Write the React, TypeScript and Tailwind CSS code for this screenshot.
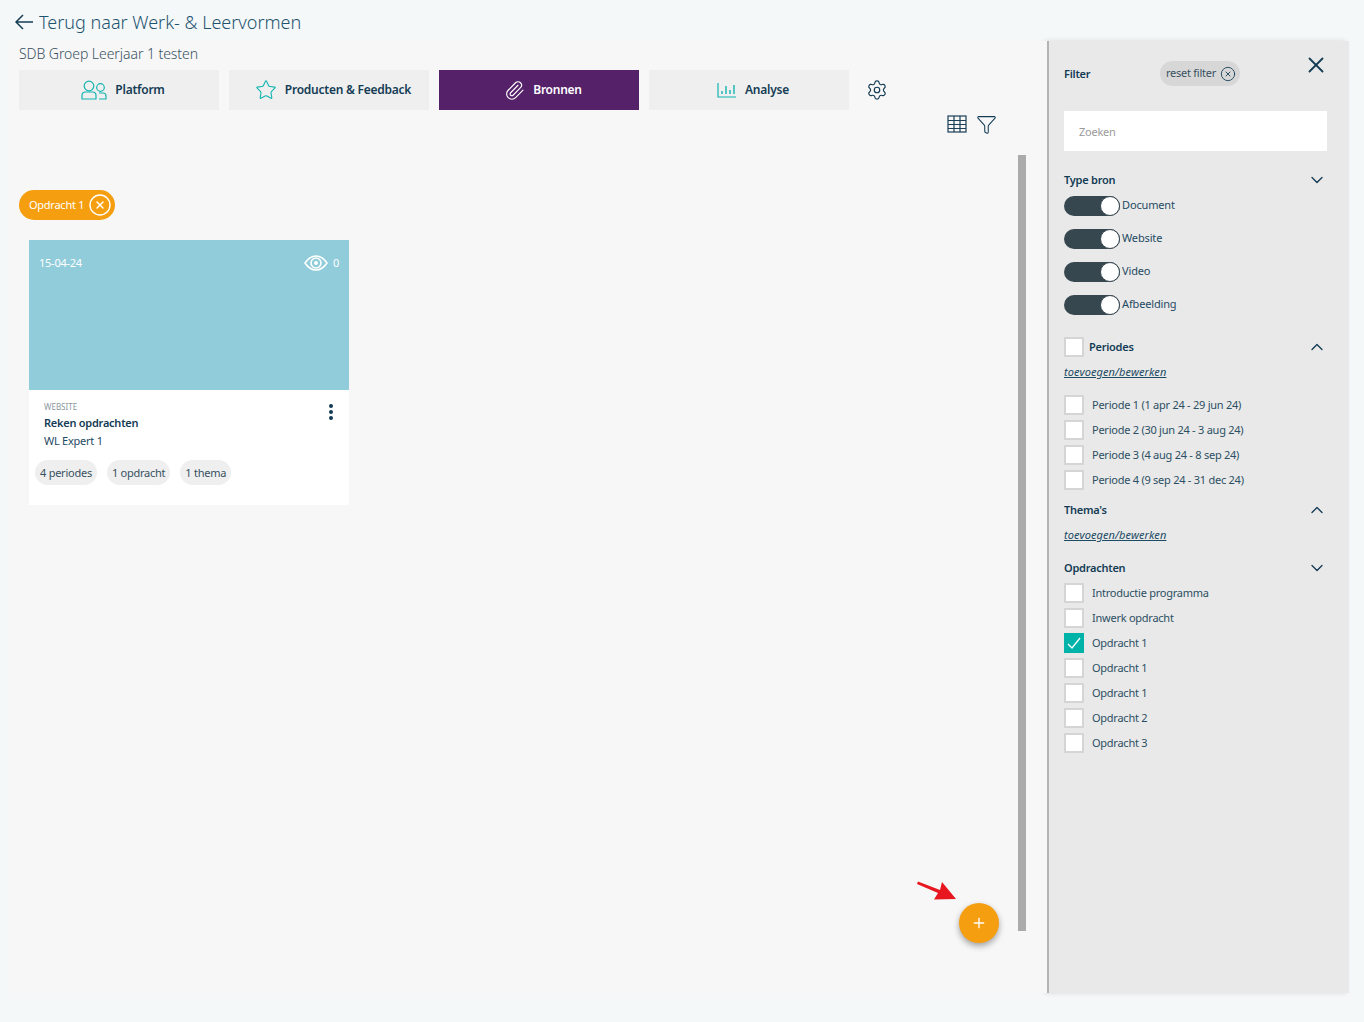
import { ChevronDown, ChevronUp, CircleX, Funnel, Paperclip, Plus, Settings, Star, X } from "lucide-react";
import type { ReactNode } from "react";

const font = { fontFamily: '"Noto Sans", sans-serif' };

function BackArrow() {
    return (
        <svg width="18" height="16" viewBox="0 0 18 16" fill="none" stroke="#143c55" strokeWidth="1.500">
            <path d="M18 8H1M8 1L1 8l7 7" />
        </svg>
    );
}

function UsersIcon() {
    return (
        <svg width="26" height="20" viewBox="0 0 26 20" fill="none" stroke="#13b5b1" strokeWidth="1.2">
            <circle cx="8" cy="6" r="4.8" />
            <path d="M1 19v-3.5C1 13.5 2.500 12 4.500 12h7c2 0 3.500 1.500 3.500 3.500V19z" />
            <circle cx="19.500" cy="7.500" r="3.800" />
            <path d="M18 19h7v-3c0-1.800-1.200-3-3-3h-4" />
        </svg>
    );
}

function ChartIcon() {
    return (
        <svg width="20" height="16" viewBox="0 0 20 16" fill="none" stroke="#13b5b1" strokeWidth="1.2">
            <path d="M1 1v14h18" />
            <path d="M5 12V9M9 12V4M13 12V8M17 12V3" strokeWidth="1.400" />
        </svg>
    );
}

function GridIcon() {
    return (
        <svg width="20" height="18" viewBox="0 0 20 18" fill="none" stroke="#1b3f56" strokeWidth="1.200">
            <rect x="1" y="1" width="18" height="16" />
            <path d="M1 5.500h18M1 9.500h18M1 13.500h18M7 1v16M13 1v16" />
        </svg>
    );
}

function EyeIcon() {
    return (
        <svg width="24" height="16" viewBox="0 0 24 16" fill="none" stroke="#ffffff" strokeWidth="1.600">
            <path d="M1 8c3-4.500 6.800-7 11-7s8 2.500 11 7c-3 4.500-6.800 7-11 7S4 12.500 1 8z" />
            <circle cx="12" cy="8" r="5" />
            <circle cx="12" cy="8" r="2" fill="#ffffff" stroke="none" />
        </svg>
    );
}

function RedArrow() {
    return (
        <svg width="40" height="20" viewBox="0 0 40 20" className="absolute top-[839px] left-[908px]">
            <path d="M1 1.500L23 10l2-8 14 17-22 .5 4-6.500L0 4z" fill="#e8171f" />
        </svg>
    );
}

function Tab({ icon, label, active }: { icon: ReactNode; label: string; active?: boolean }) {
    return (
        <div
            className={`flex h-10 w-[200px] items-center justify-center gap-[8px] pl-[8px] text-[12px] font-semibold ${
                active ? "bg-[#55226a] text-white" : "bg-[#efefef] text-[#143c55]"
            }`}
        >
            {icon}
            <span>{label}</span>
        </div>
    );
}

function Toggle({ label }: { label: string }) {
    return (
        <div className="flex h-[33px] items-start">
            <div className="flex h-5 w-14 justify-end rounded-full bg-[#37474f]">
                <div className="h-5 w-5 rounded-full border border-[#37474f] bg-white" />
            </div>
            <span className="ml-[2px] text-[11px] leading-[18px] tracking-[-0.15px] text-[#1f4a63]">{label}</span>
        </div>
    );
}

function Check({ label, checked }: { label: string; checked?: boolean }) {
    return (
        <div className="flex h-[25px] items-start">
            {checked ? (
                <div className="flex h-5 w-5 items-center justify-center bg-[#00b3a8]">
                    <svg width="14" height="12" viewBox="0 0 14 12" fill="none" stroke="#ffffff" strokeWidth="1.300">
                        <path d="M1 7l4 4 8-10" />
                    </svg>
                </div>
            ) : (
                <div className="h-5 w-5 border-2 border-[#d5d5d5] bg-white" />
            )}
            <span className="ml-2 text-[11px] leading-5 text-[#2c4f63]">{label}</span>
        </div>
    );
}

function SectionHead({ title, open, children }: { title?: string; open?: boolean; children?: ReactNode }) {
    const Chevron = open ? ChevronUp : ChevronDown;
    return (
        <div className="flex h-5 items-center justify-between">
            {children ?? <span className="text-[11px] font-semibold text-[#143c55]">{title}</span>}
            <Chevron size={20} strokeWidth={1.600} className="text-[#143c55]" />
        </div>
    );
}

function EditLink() {
    return <a className="block text-[11px] leading-5 tracking-[0.1px] text-[#1b4a63] italic underline">toevoegen/bewerken</a>;
}

function Pill({ label }: { label: string }) {
    return <span className="rounded-full bg-[#efefef] px-[5px] py-[4px] text-[11px] leading-[17px] tracking-[-0.25px] text-[#37515f]">{label}</span>;
}

export default function App() {
    const periods = [
        "Periode 1 (1 apr 24 - 29 jun 24)",
        "Periode 2 (30 jun 24 - 3 aug 24)",
        "Periode 3 (4 aug 24 - 8 sep 24)",
        "Periode 4 (9 sep 24 - 31 dec 24)",
    ];
    const assignments = ["Inwerk opdracht", "Opdracht 1", "Opdracht 1", "Opdracht 1", "Opdracht 2", "Opdracht 3"];

    return (
        <div className="h-[1022px] w-full overflow-hidden bg-[#f4f8f8] tracking-[-0.25px]" style={font}>
            {/* Back link */}
            <div className="flex h-[41px] items-center pt-[3px] pl-[15px] text-[18px] font-light tracking-[0px] text-[#1f5470]">
                <BackArrow />
                <span className="ml-[6px]">Terug naar Werk- &amp; Leervormen</span>
            </div>

            <div className="flex h-[952px] pr-[15px] pl-[9px]">
                {/* Main */}
                <div className="relative flex-1 bg-[#f7f7f7]">
                    <div className="flex h-[29px] items-center pb-[4px] pl-[10px] text-[14px] font-light tracking-[-0.06px] text-[#37515f]">SDB Groep Leerjaar 1 testen</div>
                    <div className="flex items-center gap-[10px] pl-[10px]">
                        <Tab icon={<UsersIcon />} label="Platform" />
                        <Tab icon={<Star size={22} strokeWidth={1.200} className="text-[#13b5b1]" />} label="Producten & Feedback" />
                        <Tab icon={<Paperclip size={21} strokeWidth={1.300} className="text-white" />} label="Bronnen" active />
                        <Tab icon={<ChartIcon />} label="Analyse" />
                        <Settings size={22} strokeWidth={1.300} className="ml-[7px] text-[#143c55]" />
                    </div>
                    <div className="flex h-[28px] items-center justify-end gap-[9px] pr-[50px]">
                        <GridIcon />
                        <Funnel size={21} strokeWidth={1.200} className="text-[#143c55]" />
                    </div>
                    <div className="mt-[52px] ml-[10px] flex h-[30px] w-[96px] items-center rounded-full bg-[#f59e0f] pl-[10px] text-[11px] text-white">
                        Opdracht 1
                        <CircleX size={24} strokeWidth={1.400} className="ml-[4px] shrink-0" />
                    </div>

                    {/* Card */}
                    <div className="mt-[20px] ml-[20px] h-[265px] w-[320px] bg-white">
                        <div className="flex h-[150px] items-start justify-between bg-[#90ccda] px-[10px] pt-[14px] text-[11px] text-white">
                            <span className="leading-[18px]">15-04-24</span>
                            <div className="flex items-center gap-[5px] leading-[18px]">
                                <EyeIcon />
                                <span>0</span>
                            </div>
                        </div>
                        <div className="relative px-[15px] pt-[11px]">
                            <div className="text-[8px] leading-3 tracking-[0px] text-[#8a98a0]">WEBSITE</div>
                            <div className="mt-[1px] text-[11px] leading-[18px] font-semibold text-[#143c55]">Reken opdrachten</div>
                            <div className="text-[11px] leading-[18px] text-[#1f4a63]">WL Expert 1</div>
                            <div className="mt-[10px] -ml-[9px] flex gap-[10px]">
                                <Pill label="4 periodes" />
                                <Pill label="1 opdracht" />
                                <Pill label="1 thema" />
                            </div>
                            <div className="absolute top-[14px] right-[16px] flex flex-col gap-[2px]">
                                <div className="h-[4px] w-[4px] rounded-full bg-[#143c55]" />
                                <div className="h-[4px] w-[4px] rounded-full bg-[#143c55]" />
                                <div className="h-[4px] w-[4px] rounded-full bg-[#143c55]" />
                            </div>
                        </div>
                    </div>

                    {/* Scroll thumb, arrow and add button sit over the content */}
                    <div className="absolute top-[114px] left-[1009px] h-[776px] w-[8px] bg-[#ababab]" />
                    <RedArrow />
                    <div className="absolute top-[862px] left-[950px] flex h-10 w-10 items-center justify-center rounded-full bg-[#f59e0f] shadow-[0_3px_6px_rgba(0,0,0,0.35)]">
                        <Plus size={16} strokeWidth={2} className="text-white" />
                    </div>
                </div>

                {/* Filter panel */}
                <aside className="w-[302px] shrink-0 border-l-2 border-[#b4b4b4] bg-[#e9e9e9] pr-[22px] pl-[15px] shadow-[-3px_0_5px_rgba(0,0,0,0.12)]">
                    <div className="relative flex h-[70px] items-center">
                        <span className="-mt-[4px] text-[11px] font-semibold text-[#143c55]">Filter</span>
                        <div className="absolute top-[20px] left-[96px] flex h-[25px] w-[80px] items-center rounded-full bg-[#d7d7d7] pl-[6px] text-[11px] text-[#37515f]">
                            reset filter
                            <CircleX size={16} strokeWidth={1.300} className="ml-[4px] shrink-0 text-[#143c55]" />
                        </div>
                        <X size={26} strokeWidth={1.700} className="absolute top-[11px] left-[239px] text-[#143c55]" />
                    </div>
                    <input
                        readOnly
                        placeholder="Zoeken"
                        className="h-10 w-[263px] bg-white pl-[15px] text-[11px] outline-none placeholder:text-[#9a9a9a]"
                    />
                    <div className="mt-[19px]">
                        <SectionHead title="Type bron" />
                    </div>
                    <div className="mt-[6px]">
                        {["Document", "Website", "Video", "Afbeelding"].map((t) => (
                            <Toggle key={t} label={t} />
                        ))}
                    </div>
                    <div className="mt-[9px]">
                        <SectionHead open>
                            <div className="flex items-center">
                                <div className="h-5 w-5 border-2 border-[#d5d5d5] bg-white" />
                                <span className="ml-[5px] text-[11px] font-semibold text-[#143c55]">Periodes</span>
                            </div>
                        </SectionHead>
                    </div>
                    <div className="mt-[5px] h-[33px]">
                        <EditLink />
                    </div>
                    {periods.map((p) => (
                        <Check key={p} label={p} />
                    ))}
                    <div className="mt-[5px]">
                        <SectionHead title="Thema's" open />
                    </div>
                    <div className="mt-[5px] h-[33px]">
                        <EditLink />
                    </div>
                    <SectionHead title="Opdrachten" />
                    <div className="mt-[5px]">
                        <Check label="Introductie programma" />
                        {assignments.map((a, i) => (
                            <Check key={i} label={a} checked={i === 1} />
                        ))}
                    </div>
                </aside>
            </div>
        </div>
    );
}
